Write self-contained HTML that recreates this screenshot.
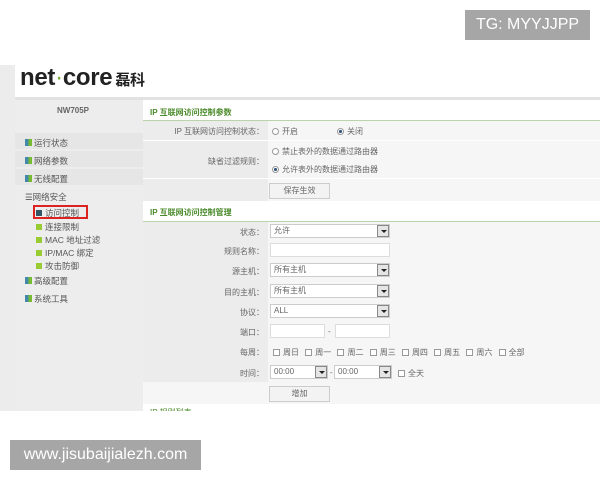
<!DOCTYPE html>
<html><head><meta charset="utf-8"><style>
*{margin:0;padding:0;box-sizing:border-box}
body{width:600px;height:480px;background:#fff;position:relative;overflow:hidden;font-family:"Liberation Sans","Noto Sans CJK SC",sans-serif;color:#666}
.a{position:absolute}
.lbl{position:absolute;background:#a6a6a6;color:#fff;font-size:16px;line-height:30px;text-align:center}
.t{font-size:8px;white-space:nowrap;position:absolute}
.side .t{font-size:8.5px;color:#555}
.sel{position:absolute;height:14px;width:120px;background:#fff;border:1px solid #ccc;font-size:8px;line-height:12px;padding-left:3px;color:#666}
.sel i{position:absolute;right:0;top:0;width:12px;height:12px;background:#e5e5e5;border:1px solid #888}
.sel i:after{content:"";position:absolute;left:3px;top:4px;border:3px solid transparent;border-top:3px solid #222}
.inp{position:absolute;height:14px;background:#fff;border:1px solid #ddd}
.btn{position:absolute;height:16px;background:#f3f3f3;border:1px solid #ccc;font-size:8px;text-align:center;line-height:14px}
.cb{display:inline-block;width:7px;height:7px;border:1px solid #999;background:#fff;margin:0 3px 0 4px;vertical-align:-1px}
.rd{display:inline-block;width:7px;height:7px;border-radius:50%;border:1px solid #999;margin-right:3px;vertical-align:-1px;background:#fff}
.rd.on{background:radial-gradient(#357 40%,#fff 50%)}
.g{color:#4a8a2a;font-size:8px;position:absolute;font-weight:bold}
.sq{display:inline-block;width:6px;height:6px;background:#9c3;margin-right:3px}
.ic{display:inline-block;width:7px;height:7px;margin-right:2px;background:linear-gradient(90deg,#48a 50%,#7b3 50%)}
</style></head><body>
<div class="lbl" style="left:465px;top:10px;width:125px;height:30px">TG: MYYJJPP</div>
<div class="lbl" style="left:10px;top:440px;width:191px;height:30px">www.jisubaijialezh.com</div>

<div class="a" style="left:0;top:65px;width:600px;height:346px;background:#fff"></div>
<div class="a" style="left:0;top:65px;width:15px;height:346px;background:#ececec"></div>
<div class="a" style="left:20px;top:64px;font-size:24px;font-weight:bold;color:#222;letter-spacing:-0.3px">net<span style="color:#7a3;font-weight:normal">·</span>core<span style="font-size:15px;margin-left:3px">磊科</span></div>
<div class="a" style="left:15px;top:97px;width:585px;height:3px;background:#e2e2e2"></div>
<div class="a side" style="left:15px;top:100px;width:128px;height:311px;background:#ededed">
<div class="t" style="left:42px;top:6px;font-weight:bold;font-size:8px;color:#666">NW705P</div>
<div class="a" style="left:0;top:33px;width:128px;height:16px;background:#e6e6e6"></div>
<div class="a" style="left:0;top:51px;width:128px;height:16px;background:#e6e6e6"></div>
<div class="a" style="left:0;top:69px;width:128px;height:16px;background:#e6e6e6"></div>
<div class="t" style="left:10px;top:37px"><span class="ic"></span>运行状态</div>
<div class="t" style="left:10px;top:55px"><span class="ic"></span>网络参数</div>
<div class="t" style="left:10px;top:73px"><span class="ic"></span>无线配置</div>
<div class="t" style="left:10px;top:91px">☰网络安全</div>
<div class="a" style="left:18px;top:105px;width:55px;height:14px;border:2px solid #d22"></div>
<div class="t" style="left:21px;top:107px"><span class="sq" style="background:#356"></span>访问控制</div>
<div class="t" style="left:21px;top:121px"><span class="sq"></span>连接限制</div>
<div class="t" style="left:21px;top:134px"><span class="sq"></span>MAC 地址过滤</div>
<div class="t" style="left:21px;top:147px"><span class="sq"></span>IP/MAC 绑定</div>
<div class="t" style="left:21px;top:160px"><span class="sq"></span>攻击防御</div>
<div class="t" style="left:10px;top:175px"><span class="ic"></span>高级配置</div>
<div class="t" style="left:10px;top:193px"><span class="ic"></span>系统工具</div>
</div>

<div class="a" style="left:143px;top:100px;width:457px;height:311px;background:#fff"></div>
<div class="g" style="left:150px;top:107px">IP 互联网访问控制参数</div>
<div class="a" style="left:143px;top:120px;width:457px;height:1px;background:#b8d4a8"></div>
<div class="a" style="left:143px;top:121px;width:125px;height:80px;background:#ececec"></div>
<div class="a" style="left:268px;top:121px;width:332px;height:80px;background:#f6f6f6"></div>
<div class="a" style="left:143px;top:140px;width:457px;height:1px;background:#fff"></div>
<div class="a" style="left:143px;top:178px;width:457px;height:1px;background:#fff"></div>
<div class="t" style="right:336px;top:126px">IP 互联网访问控制状态：</div>
<div class="t" style="left:272px;top:126px"><span class="rd"></span>开启</div>
<div class="t" style="left:337px;top:126px"><span class="rd on"></span>关闭</div>
<div class="t" style="right:336px;top:156px">缺省过滤规则：</div>
<div class="t" style="left:272px;top:146px"><span class="rd"></span>禁止表外的数据通过路由器</div>
<div class="t" style="left:272px;top:164px"><span class="rd on"></span>允许表外的数据通过路由器</div>
<div class="btn" style="left:269px;top:183px;width:61px">保存生效</div>

<div class="g" style="left:150px;top:207px">IP 互联网访问控制管理</div>
<div class="a" style="left:143px;top:221px;width:457px;height:1px;background:#b8d4a8"></div>
<div class="a" style="left:143px;top:222px;width:125px;height:160px;background:#ececec"></div>
<div class="a" style="left:268px;top:222px;width:332px;height:160px;background:#f6f6f6"></div>
<div class="a" style="left:143px;top:382px;width:457px;height:22px;background:#f6f6f6"></div>

<div class="t" style="right:336px;top:227px">状态：</div>
<div class="sel" style="left:270px;top:224px">允许<i></i></div>
<div class="t" style="right:336px;top:246px">规则名称：</div>
<div class="inp" style="left:270px;top:243px;width:120px"></div>
<div class="t" style="right:336px;top:266px">源主机：</div>
<div class="sel" style="left:270px;top:263px">所有主机<i></i></div>
<div class="t" style="right:336px;top:287px">目的主机：</div>
<div class="sel" style="left:270px;top:284px">所有主机<i></i></div>
<div class="t" style="right:336px;top:307px">协议：</div>
<div class="sel" style="left:270px;top:304px">ALL<i></i></div>
<div class="t" style="right:336px;top:327px">端口：</div>
<div class="inp" style="left:270px;top:324px;width:55px"></div>
<div class="t" style="left:328px;top:327px">-</div>
<div class="inp" style="left:335px;top:324px;width:55px"></div>
<div class="t" style="right:336px;top:347px">每周：</div>
<div class="t" style="left:269px;top:347px"><span class="cb"></span>周日 <span class="cb"></span>周一 <span class="cb"></span>周二 <span class="cb"></span>周三 <span class="cb"></span>周四 <span class="cb"></span>周五 <span class="cb"></span>周六 <span class="cb"></span>全部</div>
<div class="t" style="right:336px;top:368px">时间：</div>
<div class="sel" style="left:270px;top:365px;width:58px">00:00<i></i></div>
<div class="t" style="left:330px;top:368px">-</div>
<div class="sel" style="left:334px;top:365px;width:58px">00:00<i></i></div>
<div class="t" style="left:394px;top:368px"><span class="cb"></span>全天</div>
<div class="btn" style="left:269px;top:386px;width:61px">增加</div>
<div class="g" style="left:150px;top:407px;font-weight:normal;height:4px;overflow:hidden">IP 规则列表</div>
</body></html>
